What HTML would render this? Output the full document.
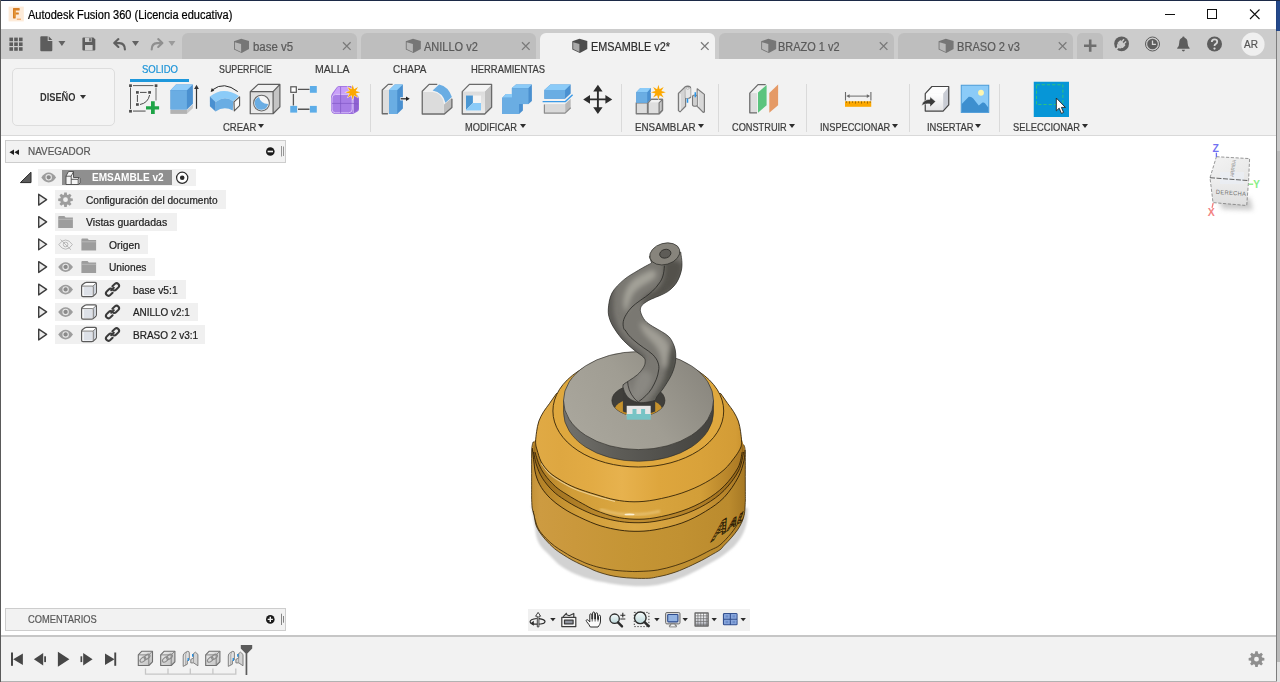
<!DOCTYPE html>
<html lang="es">
<head>
<meta charset="utf-8">
<title>Autodesk Fusion 360 (Licencia educativa)</title>
<style>
*{box-sizing:border-box;margin:0;padding:0}
html,body{width:1280px;height:682px;overflow:hidden;background:#fff}
body{font-family:"Liberation Sans",sans-serif;color:#333;position:relative}
.a,.tx,svg{position:absolute}
svg{overflow:visible}
.tx{white-space:nowrap;transform-origin:0 0;-webkit-text-stroke:0.22px currentColor}
.tab{top:33px;height:26px;width:175px;background:#bebebe;border-radius:6px 6px 0 0}
.sep{top:84px;width:1px;height:48px;background:#dadada}
.dd{width:0;height:0;border-left:3px solid transparent;border-right:3px solid transparent;border-top:4px solid #2d2d2d}
.row{height:19px;background:#f0f0f0}
</style>
</head>
<body>
<!-- window frame / desktop strip -->
<div class="a" style="left:1px;top:1px;width:1275px;height:28px;background:#fff"></div>
<div class="a" style="left:1px;top:29px;width:1275px;height:30px;background:#cccccc"></div>
<div class="a" style="left:1px;top:59px;width:1275px;height:76px;background:#f2f2f2"></div>
<div class="a" style="left:1px;top:135px;width:1275px;height:1px;background:#d9d9d9"></div>
<div class="a" style="left:1px;top:136px;width:1275px;height:499px;background:#fff"></div>
<div class="a" style="left:1277px;top:0;width:3px;height:31px;background:#24498c"></div>
<div class="a" style="left:1277px;top:31px;width:3px;height:120px;background:#cacaca"></div>
<div class="a" style="left:1277px;top:151px;width:3px;height:511px;background:#b9b9b9"></div>
<div class="a" style="left:1277px;top:662px;width:3px;height:20px;background:#e2e2e2"></div>
<div class="a" style="left:0;top:0;width:1280px;height:1px;background:#1c2a48"></div>
<div class="a" style="left:0;top:0;width:1px;height:682px;background:#5a5a5a"></div>
<div class="a" style="left:1276px;top:1px;width:1px;height:681px;background:#7d7d7d"></div>
<div class="a" style="left:1276px;top:1px;width:1px;height:30px;background:#22427f"></div>
<!-- title icon -->
<svg style="left:8px;top:6px" width="17" height="17" viewBox="8 6 17 17">
<rect x="8.600" y="6.600" width="15.200" height="14.800" fill="#fdebd9"/>
<path d="M13,8.400 q0,-0.400 0.400,-0.400 h5.900 q0.400,0 0.400,0.400 v1.700 q0,0.400 -0.400,0.400 h-3.600 v1.900 h2.700 q0.400,0 0.400,0.400 v1.400 q0,0.400 -0.400,0.400 h-2.700 v3.500 q0,0.400 -0.400,0.400 h-1.900 q-0.400,0 -0.400,-0.400z" fill="#d67f25"/>
<path d="M14.300,10.200 q1.200,-0.600 1.400,1 v5.400 q-0.700,0.600 -1.400,0z" fill="#f0a544" opacity="0.800"/>
<rect x="16.800" y="18.600" width="4.200" height="1.300" fill="#f2b071"/>
</svg>
<!-- window controls -->
<svg style="left:1160px;top:5px" width="110" height="20" viewBox="1160 5 110 20" fill="none" stroke="#111" stroke-width="1">
<path d="M1165,14.5 h10"/>
<rect x="1207.5" y="9.5" width="9" height="9"/>
<path d="M1250,9.5 l9.5,9.5 M1259.5,9.5 l-9.5,9.5" stroke-width="1.1"/>
</svg>
<!-- document tabs -->
<div class="a tab" style="left:182px"></div>
<div class="a tab" style="left:361px"></div>
<div class="a tab" style="left:540px;background:#f2f2f2"></div>
<div class="a tab" style="left:719px"></div>
<div class="a tab" style="left:898px"></div>
<div class="a" style="left:1077px;top:33px;width:26px;height:26px;background:#bfbfbf;border-radius:5px 5px 0 0"></div>
<svg style="left:0;top:29px" width="1280" height="30" viewBox="0 29 1280 30">
<defs>
<g id="cube"><path d="M0,2.6 L7.2,0 L15,2.4 L15,10.2 L7.6,14.4 L0,10.8z" fill="#5e5e5e"/><path d="M0.9,3.5 L7.1,5.3 L7.1,13.2 L0.9,10.3z" fill="#b7b7b7"/></g>
<g id="cubeA"><path d="M0,2.6 L7.2,0 L15,2.4 L15,10.2 L7.6,14.4 L0,10.8z" fill="#4c4c4c"/><path d="M0.9,3.5 L7.1,5.3 L7.1,13.2 L0.9,10.3z" fill="#a9a9a9"/></g>
<path id="tx" d="M0,0 l7.6,7.6 M7.6,0 l-7.6,7.6" stroke="#7a7a7a" stroke-width="1.3" fill="none"/>
</defs>
<use href="#cube" x="234" y="38.7" opacity="0.75"/><use href="#tx" x="343" y="42.3"/>
<use href="#cube" x="405.8" y="38.7" opacity="0.75"/><use href="#tx" x="522" y="42.3"/>
<use href="#cubeA" x="572.3" y="38.7"/><use href="#tx" x="701" y="42.3"/>
<use href="#cube" x="761.2" y="38.7" opacity="0.75"/><use href="#tx" x="879.8" y="42.3"/>
<use href="#cube" x="938.6" y="38.7" opacity="0.75"/><use href="#tx" x="1058.8" y="42.3"/>
<!-- plus -->
<path d="M1084,45.7 h12.4 M1090.2,39.6 v12.2" stroke="#6e6e6e" stroke-width="2.6" fill="none"/>
<!-- app grid -->
<g fill="#5d5d5d">
<rect x="9.4" y="37.6" width="3.6" height="3.6"/><rect x="14.2" y="37.6" width="3.6" height="3.6"/><rect x="19" y="37.6" width="3.6" height="3.6"/>
<rect x="9.4" y="42.4" width="3.6" height="3.6"/><rect x="14.2" y="42.4" width="3.6" height="3.6"/><rect x="19" y="42.4" width="3.6" height="3.6"/>
<rect x="9.4" y="47.2" width="3.6" height="3.6"/><rect x="14.2" y="47.2" width="3.6" height="3.6"/><rect x="19" y="47.2" width="3.6" height="3.6"/>
</g>
<!-- file -->
<path d="M40.3,37.3 q0,-1 1,-1 h6.4 v4.6 h4.6 v9.4 q0,1 -1,1 h-10 q-1,0 -1,-1z M48.7,36.3 l3.6,3.6 h-3.6z" fill="#5d5d5d"/>
<path d="M58.400,41 h7 l-3.500,4.900z" fill="#626262"/>
<!-- save -->
<path d="M82.4,38.6 q0,-1 1,-1 h10 l1.9,1.9 v9.9 q0,1 -1,1 h-10.9 q-1,0 -1,-1z" fill="#5d5d5d"/>
<rect x="85" y="37.6" width="6.6" height="4.4" fill="#cccccc"/><rect x="89.2" y="38.2" width="1.6" height="3.2" fill="#5d5d5d"/>
<rect x="85" y="45" width="7.6" height="5.4" fill="#cccccc"/>
<!-- undo -->
<path d="M118.400,39.100 L114.200,43.100 L118.400,47 M114.600,43.100 H119.600 Q124.800,43.300 124.900,49.400" stroke="#5f5f5f" stroke-width="2.100" fill="none" stroke-linecap="round" stroke-linejoin="round"/>
<path d="M132,41 h7 l-3.500,4.900z" fill="#626262"/>
<!-- redo -->
<path d="M158.200,39.100 L162.400,43.100 L158.200,47 M162,43.100 H157 Q151.800,43.300 151.700,49.400" stroke="#8f8f8f" stroke-width="2.100" fill="none" stroke-linecap="round" stroke-linejoin="round"/>
<path d="M168.400,41 h7 l-3.500,4.900z" fill="#9b9b9b"/>
<!-- extensions -->
<circle cx="1121.600" cy="43.800" r="7.400" fill="#5f5f5f"/>
<g transform="rotate(45 1121.200 44.300)" fill="#cccccc">
<rect x="1117.500" y="41.700" width="7.400" height="4.500" rx="0.800"/>
<path d="M1118.200,46 h6 q0,2.800 -3,3 q-3,-0.200 -3,-3z"/>
<rect x="1120.300" y="48" width="1.800" height="5"/>
<rect x="1119" y="38.800" width="1.400" height="3.300"/><rect x="1122" y="38.800" width="1.400" height="3.300"/>
</g>
<!-- clock -->
<circle cx="1152.5" cy="44" r="7" fill="none" stroke="#5d5d5d" stroke-width="1"/>
<circle cx="1152.5" cy="44" r="5.3" fill="#5d5d5d"/>
<path d="M1152.5,40.6 v3.8 h3.4" stroke="#d6d6d6" stroke-width="1.3" fill="none"/>
<!-- bell -->
<path d="M1183.4,36.6 q1.2,0 1.2,1.2 q3,1 3,5.2 q0,3.4 2,5 v0.8 h-12.4 v-0.8 q2,-1.6 2,-5 q0,-4.2 3,-5.2 q0,-1.2 1.2,-1.2z" fill="#5d5d5d"/>
<path d="M1181.8,49.8 h3.2 q-0.3,1.6 -1.6,1.6 q-1.3,0 -1.6,-1.6z" fill="#5d5d5d"/>
<!-- help -->
<circle cx="1214.5" cy="44" r="7.5" fill="#5d5d5d"/>
<path d="M1211.8,42 q0,-2.6 2.7,-2.6 q2.7,0 2.7,2.3 q0,1.4 -1.4,2.2 q-1.3,0.7 -1.3,2" stroke="#d8d8d8" stroke-width="1.8" fill="none"/>
<circle cx="1214.5" cy="48.6" r="1.15" fill="#d8d8d8"/>
<!-- avatar -->
<circle cx="1253" cy="44.2" r="11.6" fill="#efefef"/>
</svg>
<!-- ribbon structure -->
<div class="a" style="left:130px;top:79px;width:59px;height:3px;background:#1e98dc"></div>
<div class="a" style="left:12px;top:68px;width:103px;height:58px;border:1px solid #dddddd;border-radius:5px;background:#f4f4f4"></div>
<div class="a dd" style="left:80px;top:95px;border-top-color:#333"></div>
<div class="a dd" style="left:258px;top:124px"></div>
<div class="a dd" style="left:520px;top:124px"></div>
<div class="a dd" style="left:698px;top:124px"></div>
<div class="a dd" style="left:789px;top:124px"></div>
<div class="a dd" style="left:892px;top:124px"></div>
<div class="a dd" style="left:975px;top:124px"></div>
<div class="a dd" style="left:1082px;top:124px"></div>
<div class="a sep" style="left:370px"></div>
<div class="a sep" style="left:621px"></div>
<div class="a sep" style="left:718px"></div>
<div class="a sep" style="left:806px"></div>
<div class="a sep" style="left:909px"></div>
<div class="a sep" style="left:999px"></div>
<svg style="left:0;top:59px" width="1280" height="77" viewBox="0 59 1280 77">
<defs>
<linearGradient id="gB" x1="0" y1="0" x2="0" y2="1"><stop offset="0" stop-color="#6db4ec"/><stop offset="1" stop-color="#4a98dc"/></linearGradient>
<linearGradient id="gG" x1="0" y1="0" x2="0" y2="1"><stop offset="0" stop-color="#dcdcdc"/><stop offset="1" stop-color="#ececec"/></linearGradient>
<linearGradient id="gW" x1="0" y1="0" x2="0" y2="1"><stop offset="0" stop-color="#ffffff"/><stop offset="1" stop-color="#e2e2e4"/></linearGradient>
<linearGradient id="gP" x1="0" y1="0" x2="1" y2="1"><stop offset="0" stop-color="#c9a6f2"/><stop offset="1" stop-color="#9a6fdc"/></linearGradient>
</defs>
<!-- 1 create sketch -->
<path d="M133,85.600 H153.400 M130.500,87.500 V109" stroke="#5a5a5a" stroke-width="1" fill="none"/>
<path d="M156,87.500 V100.600" stroke="#9a9a9a" stroke-width="1.500" fill="none"/>
<path d="M133,111.100 H145.600" stroke="#8a8a8a" stroke-width="1.600" fill="none"/>
<g fill="#4a4a4a"><rect x="129.100" y="84.300" width="2.800" height="2.700"/><rect x="154.700" y="84.300" width="2.700" height="2.700"/><rect x="129.100" y="109.900" width="2.800" height="2.700"/>
<rect x="136" y="91.100" width="2.800" height="2.600"/><rect x="148.200" y="91.100" width="2.800" height="2.600"/><rect x="136" y="103.200" width="2.800" height="2.600"/></g>
<path d="M140,92.400 H146.600 M137.400,95 V101.900" stroke="#4a4a4a" stroke-width="1" fill="none"/>
<path d="M149.600,95 Q148,103 140,104.500" stroke="#4a4a4a" stroke-width="1" fill="none"/>
<path d="M151,101.250 h3.750 v5 h4.350 v3.150 h-4.350 v4.600 h-3.750 v-4.600 h-5 v-3.150 h5z" fill="#1ea446"/>
<!-- 2 extrude -->
<path d="M170.500,110 h16.400 l6,-5.600 v3.800 l-6,5.600 h-16.400z" fill="#c9c9c9"/><path d="M170.500,110 h16.400 v3.800 h-16.400z" fill="#b3b3b3"/>
<path d="M170.500,90.300 l5.500,-5.900 h16.900 v19.400 l-6,5.600 h-16.400z" fill="#4a90d0"/>
<path d="M170.500,90.300 l5.500,-5.900 h16.900 l-6,5.900z" fill="#90ccf9"/>
<path d="M170.500,90.300 h16.400 v19.100 h-16.400z" fill="#6aade3"/>
<path d="M196.500,88 v20.800" stroke="#333" stroke-width="1.200"/><path d="M196.500,84.800 l2.400,4.100 h-4.800z" fill="#333"/>
<!-- 3 revolve -->
<path d="M209.900,96.600 Q222.750,85.600 239,95.900 L233.400,101.250 Q224.600,95 215.600,101.900z" fill="#8bcbf8"/>
<path d="M215.600,101.900 Q224.600,95 233.400,101.250 L232.750,110.600 Q224,105.600 215.600,111.600z" fill="#6aade3"/>
<path d="M209.900,96.600 L215.600,101.900 V111.600 L209.900,106.250z" fill="#4a90d0"/>
<path d="M234,101.900 L239.600,96.900 V105.600 L234.300,110.900z" fill="#f8f8f8" stroke="#555" stroke-width="1.100" stroke-linejoin="round"/>
<path d="M237.750,91.600 Q224,80.800 212.600,89.800" fill="none" stroke="#2a2a2a" stroke-width="1"/>
<path d="M210.600,91.900 L211.800,88.100 L214.200,90.700z" fill="#2a2a2a"/>
<!-- 4 hole -->
<path d="M250.250,91.600 L258.100,84.400 H279.900 V106.900 L273.100,113.750 H250.250z" fill="#c4c4c4"/>
<path d="M250.250,91.600 L258.100,84.400 H279.900 L273.100,91.600z" fill="#f1f1f1"/>
<path d="M250.250,91.600 H273.100 V113.750 H250.250z" fill="url(#gG)"/>
<path d="M250.250,91.600 L258.100,84.400 H279.900 V106.900 L273.100,113.750 H250.250z M250.250,91.600 H273.100 V113.750 M273.100,91.600 L279.900,84.400" fill="none" stroke="#5e5e5e" stroke-width="1.200" stroke-linejoin="round"/>
<circle cx="261.500" cy="103.100" r="7.900" fill="#f5f5f5" stroke="#6a6a6a" stroke-width="1.100"/>
<path d="M259,96.900 Q260.500,103.300 268.100,104.100 A6.700,6.700 0 1 1 259,96.900z" fill="#6aade3"/>
<!-- 5 rectangular pattern -->
<path d="M298,89.400 H309.500 M293.400,94 V105.500 M298,109.250 H309.500" stroke="#555" stroke-width="1.300" fill="none"/>
<rect x="290.800" y="86.800" width="5.500" height="5.500" fill="#fff" stroke="#555" stroke-width="1.200"/>
<rect x="309.900" y="86" width="6.900" height="6.800" fill="#5dade8"/><rect x="290.250" y="105.900" width="6.900" height="6.700" fill="#5dade8"/><rect x="309.900" y="105.900" width="6.900" height="6.700" fill="#5dade8"/>
<!-- 6 form -->
<path d="M331,97.500 Q331,95 332.500,93 L337,87 Q338,86 339.500,86 H351 L359,97.500 V109 Q359,110.500 357.500,111.500 L354,113.500 Q353,114 351,114 H336 Q331,114 331,109z" fill="#9a6edc"/>
<path d="M332.500,94.800 L337.600,87.200 Q338,86.700 339,86.700 H350.500 L352,94.800z" fill="#c9a0f9"/>
<rect x="332" y="94.400" width="20.200" height="18.400" rx="3.600" fill="#a77de6" stroke="#dcc6fb" stroke-width="0.900"/>
<path d="M353.800,96.500 L358.400,99.200 V109.200 L353.800,112.600z" fill="#8e62d2"/>
<path d="M353.200,95.500 V113" stroke="#d5bdf8" stroke-width="0.900"/>
<path d="M340.600,86.800 V113.200 M332,103.400 H352.200 L358.400,104" stroke="#7f56c4" stroke-width="0.800" fill="none" opacity="0.850"/>
<path d="M352.75,83.80 L354.24,88.60 L358.69,86.26 L356.35,90.71 L361.15,92.20 L356.35,93.69 L358.69,98.14 L354.24,95.80 L352.75,100.60 L351.26,95.80 L346.81,98.14 L349.15,93.69 L344.35,92.20 L349.15,90.71 L346.81,86.26 L351.26,88.60z" fill="#f3f3f3"/>
<path d="M352.75,84.70 L353.97,89.24 L358.05,86.90 L355.71,90.98 L360.25,92.20 L355.71,93.42 L358.05,97.50 L353.97,95.16 L352.75,99.70 L351.53,95.16 L347.45,97.50 L349.79,93.42 L345.25,92.20 L349.79,90.98 L347.45,86.90 L351.53,89.24z" fill="#fca800"/>
<!-- 7 press pull -->
<path d="M382.250,90 L388.200,84.400 H392.600 L389.100,90 V113.750 H382.250z" fill="#f0f0f0"/>
<path d="M382.250,90 H389.100 V113.750 H382.250z" fill="#dedede"/>
<path d="M392.600,84.400 H388.200 L382.250,90 V113.750 H387.900" fill="none" stroke="#6a6a6a" stroke-width="1.300" stroke-linejoin="round"/>
<path d="M389.100,90 L394.750,84.400 H402.900 V108.400 L397.250,114 H389.100z" fill="#4a90d0"/>
<path d="M389.100,90 L394.750,84.400 H402.900 L397.250,90z" fill="#8bcbf8"/>
<path d="M389.100,90 H397.250 V114 H389.100z" fill="#6aade3"/>
<path d="M400.200,98.800 H406.500" stroke="#f3f3f3" stroke-width="3.200"/>
<path d="M400.700,98.800 H406.500" stroke="#2a2a2a" stroke-width="1.300"/><path d="M409.750,98.800 L406,96.500 V101.100z" fill="#222"/>
<!-- 8 fillet -->
<path d="M444,104.400 L451.900,98 V107.500 L444.400,114 H444z" fill="#bdbdbd"/>
<path d="M422.900,91.600 L429.300,85 H437.250 L432.600,91z" fill="#f1f1f1"/>
<path d="M422.900,92 H432.500 Q442.500,93 443.900,103.750 V113.300 H422.900z" fill="#dcdcdc"/>
<path d="M432.600,90.600 L439.100,84.400 Q448.500,86.500 451.900,96.900 L445.400,102.800 Q443.200,92.800 432.600,90.600z" fill="#6aade3"/>
<path d="M437.250,84.400 H429.100 L422.250,91.250 V114 H444.400 L451.900,107.500 V98.750" fill="none" stroke="#6a6a6a" stroke-width="1.300" stroke-linejoin="round"/>
<!-- 9 shell -->
<path d="M484.750,91.600 L491.600,84.400 V107.200 L484.750,114z" fill="#c0c0c0"/>
<path d="M462.250,91.600 L469.400,84.400 H491.600 L484.750,91.600z" fill="#f4f4f4"/>
<path d="M462.250,91.600 H484.750 V114 H462.250z" fill="url(#gG)"/>
<path d="M462.250,91.600 L469.400,84.400 H491.600 V107.200 L484.750,114 H462.250z" fill="none" stroke="#6a6a6a" stroke-width="1.300" stroke-linejoin="round"/>
<rect x="466" y="95.600" width="15" height="15" fill="#f4f4f4"/>
<path d="M466,95.600 H472.900 V103.100 L466,110z" fill="#4a96d2"/>
<path d="M472.900,103.100 H481 V110.600 H466 V110z" fill="#8bcbf8"/>
<!-- 10 combine -->
<path d="M511.900,88.100 L516,84.400 H531.900 V100.900 L528.500,104.100 H511.900z" fill="#4a90d0"/>
<path d="M511.900,88.100 L516,84.400 H531.900 L528.500,88.100z" fill="#8bcbf8"/>
<path d="M511.900,88.100 H528.500 V104.100 H511.900z" fill="#6aade3"/>
<path d="M502.250,97.800 L506,94.100 H512 V104.100 H522.900 V110.600 L519.100,114 H502.250z" fill="#4a90d0"/>
<path d="M502.250,97.800 L506,94.100 H512 V97.800z" fill="#8bcbf8"/>
<path d="M502.250,97.800 H512 V104.100 H519.100 V114 H502.250z" fill="#6aade3"/>
<!-- 11 offset face -->
<path d="M565.100,104.100 L570.700,98.750 V107.800 L565.100,113.100z" fill="#b8b8b8"/>
<path d="M544.400,104.100 H565.100 V113.100 H544.400z" fill="#d9d9d9"/>
<path d="M544.400,104.500 V113.100 H565.100 L570.700,107.800" fill="none" stroke="#8c8c8c" stroke-width="1.200" stroke-linejoin="round"/>
<path d="M544.400,90 L550.400,84.400 H570.700 V93.400 L565.100,98.750 H544.400z" fill="#4a90d0"/>
<path d="M544.400,90 L550.400,84.400 H570.700 L565.100,90z" fill="#8bcbf8"/>
<path d="M544.400,90 H565.100 V98.750 H544.400z" fill="#6aade3"/>
<path d="M542.600,101.600 H565.400 L572.600,94.700" fill="none" stroke="#3a9ae8" stroke-width="1.400"/>
<!-- 12 move -->
<path d="M597.900,90 V109 M588.500,99.400 H607" stroke="#2d2d2d" stroke-width="1.900" fill="none"/>
<path d="M597.900,84.700 L602.600,91.600 H593.200z M597.900,114 L602.600,107.200 H593.200z M583.200,99.400 L590,95 V103.750z M612.250,99.400 L605.400,95 V103.750z" fill="#2d2d2d"/>
<!-- 13 new component -->
<path d="M636.250,102.800 H647.500 V113.750 H636.250z" fill="#dcdcdc" stroke="#7a7a7a" stroke-width="1.300" stroke-linejoin="round"/>
<path d="M648.100,102.800 L651.250,99.400 H662.500 V110.300 L659.100,113.750 H648.100z" fill="#c8c8c8" stroke="#7a7a7a" stroke-width="1.300" stroke-linejoin="round"/>
<path d="M648.100,102.800 L651.250,99.400 H662.500 L659.100,102.800z" fill="#f2f2f2"/>
<path d="M648.100,102.800 H659.100 V113.750 H648.100z" fill="#dedede"/>
<path d="M648.100,102.800 L651.250,99.400 H662.500 V110.300 L659.100,113.750 H648.100z M659.100,113.750 V102.800 L662.500,99.400" fill="none" stroke="#7a7a7a" stroke-width="1.200" stroke-linejoin="round"/>
<path d="M636.250,92.200 L640.300,88.100 H650.900 V99 L647.200,102.800 H636.250z" fill="#4a90d0"/>
<path d="M636.250,92.200 L640.300,88.100 H650.900 L647.200,92.200z" fill="#8bcbf8"/>
<path d="M636.250,92.200 H647.200 V102.800 H636.250z" fill="#6aade3"/>
<path d="M658.40,83.80 L659.89,88.60 L664.34,86.26 L662.00,90.71 L666.80,92.20 L662.00,93.69 L664.34,98.14 L659.89,95.80 L658.40,100.60 L656.91,95.80 L652.46,98.14 L654.80,93.69 L650.00,92.20 L654.80,90.71 L652.46,86.26 L656.91,88.60z" fill="#f3f3f3"/>
<path d="M658.40,84.70 L659.62,89.24 L663.70,86.90 L661.36,90.98 L665.90,92.20 L661.36,93.42 L663.70,97.50 L659.62,95.16 L658.40,99.70 L657.18,95.16 L653.10,97.50 L655.44,93.42 L650.90,92.20 L655.44,90.98 L653.10,86.90 L657.18,89.24z" fill="#fca800"/>
<!-- 14 joint -->
<path d="M678.400,93.400 L685.300,86.800 Q686,86.200 687.800,86.200 Q690.600,86.400 690.600,88.200 V96.600 Q690.500,98.100 688,98.100 Q685.600,98.100 685.600,98.100 V106.250 L680,111.900 L678.400,110.600z" fill="#d4d4d4" stroke="#7a7a7a" stroke-width="1.200" stroke-linejoin="round"/>
<path d="M685.300,88.500 V98 " stroke="#8a8a8a" stroke-width="0.800" fill="none"/>
<path d="M685.400,88 Q688,86.600 690.600,88.200 V96.600 Q688,98.600 685.600,98.100z" fill="#e6e6e6"/>
<path d="M680.300,94 V110.500" stroke="#efefef" stroke-width="1"/>
<ellipse cx="687.700" cy="88.200" rx="1.500" ry="0.900" fill="#fff" stroke="#8a8a8a" stroke-width="0.600"/>
<path d="M697.200,88.750 L704.400,94.400 V111.900 L703.200,112.400 L697.200,106.250z" fill="#d8d8d8" stroke="#7a7a7a" stroke-width="1.200" stroke-linejoin="round"/>
<path d="M692.500,96.600 Q692.600,95 695,95 Q697.400,95 697.500,96.600 V104.800 Q697.400,106.300 695,106.300 Q692.600,106.300 692.500,104.800z" fill="#cfcfcf" stroke="#7a7a7a" stroke-width="1.100"/>
<path d="M698.300,90.800 V106.600" stroke="#f0f0f0" stroke-width="0.900"/>
<path d="M687.500,98.400 V102.800 M695.300,92.200 V97.200" stroke="#2a96ea" stroke-width="1.500"/>
<!-- 15 construct -->
<path d="M750.400,93.100 H757 V112.800 H750.400z" fill="#dedede"/>
<path d="M750.400,93.100 L758.200,85.200 H765 L757.500,93.100z" fill="#f2f2f2"/>
<path d="M765.700,84.600 H758 L749.800,93.100 V112.800 H757" fill="none" stroke="#6a6a6a" stroke-width="1.300" stroke-linejoin="round"/>
<path d="M758,92.600 L766.600,84.900 V105.200 L758,112.800z" fill="#5cc47e"/>
<path d="M769.300,93.100 L778.100,84.600 V105.200 L769.300,112.800z" fill="#e59a66"/>
<!-- 16 measure -->
<path d="M845.500,92 V100.400 M870.900,92 V100.400" stroke="#6a6a6a" stroke-width="1.100"/><path d="M848,96.100 H868.500" stroke="#6a6a6a" stroke-width="1"/>
<path d="M846.300,96.100 L849.600,94.200 V98z M870.100,96.100 L866.800,94.200 V98z" fill="#6a6a6a"/>
<rect x="845" y="101.300" width="26.250" height="5.500" fill="#fca800"/>
<path d="M846.500,101.300 v1.500 M849.500,101.300 v2.300 M852.500,101.300 v1.500 M855.500,101.300 v2.300 M858.500,101.300 v1.500 M861.500,101.300 v2.300 M864.500,101.300 v1.500 M867.500,101.300 v2.300 M870.200,101.300 v1.500" stroke="#7a5200" stroke-width="0.700"/>
<!-- 17 insert derive -->
<path d="M943.100,93.600 L948.750,86.500 V104.900 L943.100,111.100z" fill="#c9ccd4"/>
<path d="M925.250,93.600 L931.900,86.500 H948.750 L943.100,93.600z" fill="#fdfdfd"/>
<path d="M925.250,93.600 H943.100 V111.100 H925.250z" fill="url(#gW)"/>
<path d="M925.250,93.600 L931.900,86.500 H948.750 V104.900 L943.100,111.100 H925.250z" fill="none" stroke="#454545" stroke-width="1.200" stroke-linejoin="round"/>
<path d="M921.600,105.400 Q923,99.600 930,99.300 V96.750 L935.600,101.600 L930,107 V104 Q925.500,103.400 921.600,105.400z" fill="#3a3a3a" stroke="#f3f3f3" stroke-width="0.500"/>
<!-- 18 insert image -->
<rect x="961.250" y="85.250" width="27.500" height="27.150" fill="#8bcbf8" stroke="#4a9ad8" stroke-width="1"/>
<path d="M961.750,104 L968.750,96.750 Q971,96.600 973,98.200 L978.750,105.500 L982.500,102.600 Q983.750,102 985,103.200 L988.250,107.400 V111.900 H961.750z" fill="#3d8fcf"/>
<circle cx="981" cy="92.750" r="2.900" fill="#fdf6b0"/>
<!-- 19 select -->
<rect x="1033.750" y="81.750" width="35.250" height="35.250" fill="#0696d7"/>
<rect x="1036.500" y="84.750" width="26.400" height="19.750" fill="none" stroke="#2ec27e" stroke-width="1" stroke-dasharray="3.200,2"/>
<path d="M1056.300,98 V110.900 L1059.200,108.200 L1061.400,113.400 L1063.600,112.400 L1061.400,107.400 H1065.400z" fill="#fff" stroke="#222" stroke-width="0.900" stroke-linejoin="round"/>
</svg>
<!-- browser panel -->
<div class="a" style="left:5px;top:140px;width:281px;height:23px;background:#f2f2f2;border:1px solid #cdcdcd"></div>
<div class="a" style="left:38.4px;top:168.5px;width:157.3px;height:17.7px;background:#f0f0f0"></div>
<div class="a" style="left:55.1px;top:190.3px;width:170.7px;height:18.7px;background:#f0f0f0"></div>
<div class="a" style="left:55.1px;top:212.7px;width:121.6px;height:18.6px;background:#f0f0f0"></div>
<div class="a" style="left:55.2px;top:235.2px;width:92.7px;height:18.5px;background:#f0f0f0"></div>
<div class="a" style="left:55.2px;top:257.7px;width:100.2px;height:18.6px;background:#f0f0f0"></div>
<div class="a" style="left:55.2px;top:280.2px;width:131.0px;height:18.7px;background:#f0f0f0"></div>
<div class="a" style="left:55.2px;top:302.7px;width:142.5px;height:18.7px;background:#f0f0f0"></div>
<div class="a" style="left:55.2px;top:325.1px;width:149.8px;height:18.8px;background:#f0f0f0"></div>
<div class="a" style="left:62px;top:170px;width:110px;height:14.7px;background:#8f8f8f"></div>
<svg style="left:0;top:136px" width="300" height="220" viewBox="0 136 300 220">
<defs>
<g id="eye"><path d="M0,4.9 Q3.4,0 7.4,0 Q11.4,0 14.8,4.9 Q11.4,9.8 7.4,9.8 Q3.4,9.8 0,4.9z" fill="#9d9d9d"/><circle cx="7.4" cy="4.7" r="2.7" fill="#8a8a8a" stroke="#e6e6e6" stroke-width="1.1"/></g>
<g id="tri"><path d="M0.7,0.8 L8.6,6.1 L0.7,11.6z" fill="#ececec" stroke="#3d3d3d" stroke-width="1.4" stroke-linejoin="round"/></g>
<g id="fold"><path d="M0,1 q0,-1 1,-1 h5.2 l1.2,1.6 h7.3 v10.500 h-14.700z" fill="#9d9d9d"/><path d="M0,3.400 h14.700" stroke="#c4c4c4" stroke-width="0.7"/></g>
<g id="body"><path d="M0.6,4.600 q0,-1.200 1,-2 l2.400,-1.800 q0.600,-0.400 1.600,-0.400 h8.600 q1.200,0 1.200,1.200 v8.800 q0,0.800 -0.600,1.400 l-2.600,2.400 q-0.600,0.600 -1.600,0.600 h-8.600 q-1.400,0 -1.400,-1.400z" fill="#fff" stroke="#5a5a5a" stroke-width="1.2" stroke-linejoin="round"/><path d="M2.600,5 h8.600 v8.600 h-8.600z" fill="#dde1e8"/><path d="M12,4.600 l2.600,-2.400 v8.600 l-2.600,2.600z" fill="#cdd3dc"/><path d="M0.800,4.200 h10.600 q0.800,0 0.800,0.800 v9.600 M11.800,4.400 l3.200,-3" fill="none" stroke="#6a6a6a" stroke-width="0.9"/></g>
<g id="link" fill="none" stroke="#3a3a3a" stroke-width="2.050" stroke-linecap="round"><path d="M6.400,8.200 L9,5.800 M7.600,4.200 L10.200,1.800 a2.500,2.500 0 0 1 3.600,3.400 L11.200,7.800 a2.400,2.400 0 0 1 -2.600,0.600"/><path d="M7.800,10.800 L5.200,13.200 a2.500,2.500 0 0 1 -3.600,-3.400 L4.200,7.200 a2.400,2.400 0 0 1 2.600,-0.600"/></g>
</defs>
<path d="M14,149.400 v5.600 l-4.600,-2.800z M19,149.400 v5.600 l-4.600,-2.800z" fill="#1f1f1f"/>
<circle cx="270.300" cy="151.500" r="4.300" fill="#1a1a1a"/><rect x="267.600" y="150.700" width="5.400" height="1.600" fill="#f2f2f2"/>
<path d="M281.500,146 v10.500 M283.500,146.500 v9.500" stroke="#8a8a8a" stroke-width="0.9"/>
<path d="M31,172.200 V182.600 H20.400z" fill="#5d5d5d" stroke="#2a2a2a" stroke-width="1" stroke-linejoin="round"/>
<use href="#eye" x="41.300" y="172.600"/>
<g stroke="#4a4a4a" stroke-width="0.9" stroke-linejoin="round"><path d="M66,176 l2.500,-4.500 h5 v6 h5.500 l1,1 v4.500 l-1.500,1.500 h-12.500z" fill="#f4f4f4"/><path d="M66,176.200 h5.200 v8.200 M71.200,179.300 h7 v5.200 M71.200,176.200 l2.300,-4.500 M78.200,179.300 l0.800,-1.800" fill="none"/></g>
<circle cx="182.200" cy="177.800" r="5.600" fill="#fff" stroke="#2a2a2a" stroke-width="1.200"/><circle cx="182.200" cy="177.800" r="2.300" fill="#2a2a2a"/>
<use href="#tri" x="38" y="193.5"/>
<use href="#tri" x="38" y="215.8"/>
<use href="#tri" x="38" y="238.2"/>
<use href="#tri" x="38" y="260.8"/>
<use href="#tri" x="38" y="283.3"/>
<use href="#tri" x="38" y="305.8"/>
<use href="#tri" x="38" y="328.3"/>
<path d="M72.79,198.45 L72.79,200.95 L70.56,201.27 L70.19,202.17 L71.54,203.97 L69.77,205.74 L67.97,204.39 L67.07,204.76 L66.75,206.99 L64.25,206.99 L63.93,204.76 L63.03,204.39 L61.23,205.74 L59.46,203.97 L60.81,202.17 L60.44,201.27 L58.21,200.95 L58.21,198.45 L60.44,198.13 L60.81,197.23 L59.46,195.43 L61.23,193.66 L63.03,195.01 L63.93,194.64 L64.25,192.41 L66.75,192.41 L67.07,194.64 L67.97,195.01 L69.77,193.66 L71.54,195.43 L70.19,197.23 L70.56,198.13z M67.9,199.7 a2.4,2.4 0 1 0 -4.8,0 a2.4,2.4 0 1 0 4.8,0z" fill="#9d9d9d" fill-rule="evenodd"/>
<use href="#fold" x="58.200" y="215.900"/>
<g fill="none" stroke="#b9b9b9" stroke-width="1"><path d="M58.800,244.600 Q62,240 65.600,240 Q69.200,240 72.400,244.600 Q69.200,249.200 65.600,249.200 Q62,249.200 58.800,244.600z"/><circle cx="65.600" cy="244.500" r="2.300"/><path d="M60.500,239.600 L71,249.800"/></g>
<use href="#fold" x="81.400" y="238.400"/>
<use href="#eye" x="58.200" y="262.200"/><use href="#fold" x="81.400" y="260.900"/>
<use href="#eye" x="58.200" y="284.7"/><use href="#body" x="81" y="281.9"/><use href="#link" x="104.800" y="282.0"/>
<use href="#eye" x="58.200" y="307.2"/><use href="#body" x="81" y="304.4"/><use href="#link" x="104.800" y="304.5"/>
<use href="#eye" x="58.200" y="329.7"/><use href="#body" x="81" y="326.9"/><use href="#link" x="104.800" y="327.0"/>
</svg>
<!-- 3D model -->
<svg style="left:500px;top:220px" width="280" height="380" viewBox="500 220 280 380">
<defs>
<linearGradient id="yBand" x1="531" y1="0" x2="746" y2="0" gradientUnits="userSpaceOnUse">
<stop offset="0" stop-color="#c39238"/><stop offset="0.040" stop-color="#cd9b41"/><stop offset="0.200" stop-color="#ca983c"/><stop offset="0.450" stop-color="#c59535"/><stop offset="0.700" stop-color="#c19132"/><stop offset="0.920" stop-color="#bb8b2e"/><stop offset="1" stop-color="#a67824"/></linearGradient>
<linearGradient id="yDome" x1="535" y1="0" x2="742" y2="0" gradientUnits="userSpaceOnUse">
<stop offset="0" stop-color="#e0aa45"/><stop offset="0.120" stop-color="#dea741"/><stop offset="0.270" stop-color="#e2ab44"/><stop offset="0.420" stop-color="#e7b24e"/><stop offset="0.600" stop-color="#dea63d"/><stop offset="0.800" stop-color="#d9a23a"/><stop offset="0.970" stop-color="#d39c36"/><stop offset="1" stop-color="#cb9430"/></linearGradient>
<linearGradient id="yGr1" x1="535" y1="0" x2="742" y2="0" gradientUnits="userSpaceOnUse">
<stop offset="0" stop-color="#b07e25"/><stop offset="0.180" stop-color="#d19d38"/><stop offset="0.450" stop-color="#dba741"/><stop offset="0.800" stop-color="#d29e38"/><stop offset="1" stop-color="#aa7823"/></linearGradient>
<linearGradient id="yGr2" x1="535" y1="0" x2="742" y2="0" gradientUnits="userSpaceOnUse">
<stop offset="0" stop-color="#b07e25"/><stop offset="0.200" stop-color="#cf9c38"/><stop offset="0.480" stop-color="#dcaa46"/><stop offset="0.800" stop-color="#cc9836"/><stop offset="1" stop-color="#a97722"/></linearGradient>
<linearGradient id="yGr3" x1="535" y1="0" x2="742" y2="0" gradientUnits="userSpaceOnUse">
<stop offset="0" stop-color="#9a6c1c"/><stop offset="0.300" stop-color="#b9872c"/><stop offset="0.500" stop-color="#c08e31"/><stop offset="0.800" stop-color="#b07e27"/><stop offset="1" stop-color="#946618"/></linearGradient>
<linearGradient id="gDisc" x1="575" y1="445" x2="700" y2="355" gradientUnits="userSpaceOnUse">
<stop offset="0" stop-color="#aaa79d"/><stop offset="0.500" stop-color="#a09d93"/><stop offset="1" stop-color="#88857d"/></linearGradient>
<linearGradient id="gRim" x1="563" y1="0" x2="714" y2="0" gradientUnits="userSpaceOnUse">
<stop offset="0" stop-color="#73726d"/><stop offset="0.350" stop-color="#5e5d58"/><stop offset="1" stop-color="#43423e"/></linearGradient>
<clipPath id="cHole"><ellipse cx="638.400" cy="400.500" rx="26.500" ry="15.700"/></clipPath>
<filter id="bl1" x="-20%" y="-20%" width="140%" height="140%"><feGaussianBlur stdDeviation="1.200"/></filter>
<filter id="bl2" x="-30%" y="-30%" width="160%" height="160%"><feGaussianBlur stdDeviation="2.600"/></filter>
<clipPath id="cBand"><path d="M533.0,442.0 C532.8,443.3 531.9,445.3 531.7,450.0 C531.5,454.7 531.6,462.0 531.6,470.0 C531.6,478.0 531.6,493.3 531.6,498.0 C531.7,499.7 531.8,505.0 532.2,508.0 C532.6,511.0 533.6,513.2 534.2,516.0 C534.8,518.8 535.0,522.2 535.9,524.8 C536.8,527.4 537.8,529.3 539.4,531.8 C541.0,534.3 543.1,537.0 545.6,539.8 C548.1,542.6 551.5,546.1 554.4,548.6 C557.3,551.1 560.3,552.8 563.2,554.7 C566.1,556.6 569.1,558.4 572.0,560.0 C574.9,561.6 578.1,563.1 580.8,564.4 C583.5,565.6 585.4,566.4 588.0,567.5 C590.6,568.6 593.0,570.1 596.4,571.3 C599.8,572.5 604.2,573.9 608.1,574.9 C612.0,575.9 615.5,576.5 619.8,577.1 C624.1,577.7 629.2,578.0 634.0,578.2 C638.8,578.4 644.9,578.5 648.8,578.3 C652.7,578.1 654.7,577.4 657.6,576.8 C660.5,576.2 663.5,575.7 666.4,574.9 C669.3,574.1 672.3,573.2 675.2,572.2 C678.1,571.2 681.1,570.0 684.0,568.7 C686.9,567.5 689.9,566.1 692.8,564.7 C695.7,563.3 698.7,561.9 701.6,560.4 C704.5,558.9 707.3,557.3 710.4,555.5 C713.5,553.7 717.7,551.5 720.0,549.8 C722.3,548.1 722.4,547.2 724.3,545.2 C726.2,543.2 729.1,540.3 731.3,537.8 C733.5,535.2 735.7,532.5 737.5,529.9 C739.3,527.3 740.7,524.8 741.9,522.0 C743.1,519.2 743.9,516.9 744.5,513.2 C745.1,509.5 745.2,502.2 745.4,500.0 C745.4,496.7 745.3,488.0 745.3,480.0 C745.3,472.0 745.4,457.8 745.2,452.0 C745.0,446.2 744.2,446.2 744.0,445.0z"/></clipPath>

<path id="hookP" d="M649.4,256.4 L651.6,263 C649.4,264.2 643.0,267.5 638.4,270.3 C633.8,273.1 628.1,276.1 623.7,279.9 C619.3,283.7 614.6,288.1 612.0,293.0 C609.4,297.9 608.6,304.7 608.3,309.2 C608.0,313.7 608.8,316.5 610.0,320.0 C611.2,323.5 613.0,326.6 615.3,330.0 C617.5,333.4 620.4,337.3 623.5,340.6 C626.6,343.9 630.7,347.3 634.0,350.0 C637.3,352.7 641.5,355.1 643.4,357.0 C645.3,358.9 645.2,359.9 645.2,361.7 C645.2,363.5 644.7,365.5 643.4,367.6 C642.1,369.8 640.0,372.5 637.6,374.6 C635.2,376.8 631.6,378.9 629.3,380.5 C627.0,382.1 625.1,383.0 624.0,384.0 C622.9,385.0 623.1,385.9 622.9,386.3 C623.2,387.4 623.8,390.9 625.0,393.0 C626.2,395.1 627.7,397.4 630.0,399.0 C632.3,400.6 635.7,402.0 638.7,402.5 C641.7,403.0 645.2,402.4 648.0,402.0 C650.8,401.6 654.0,400.7 655.2,400.4 C655.6,399.6 656.3,397.4 657.5,395.7 C658.7,393.9 660.6,392.0 662.2,389.9 C663.8,387.8 665.3,385.4 666.9,382.8 C668.5,380.2 670.2,377.7 671.6,374.6 C673.0,371.5 674.4,367.5 675.1,364.0 C675.8,360.5 675.9,356.6 675.7,353.5 C675.5,350.4 675.0,348.1 673.9,345.3 C672.8,342.6 671.3,339.3 669.2,337.0 C667.1,334.7 664.3,333.3 661.5,331.5 C658.7,329.7 655.2,328.1 652.5,326.3 C649.8,324.5 647.0,322.9 645.0,320.5 C643.0,318.1 641.2,314.4 640.6,312.0 C640.0,309.6 640.4,308.0 641.3,306.3 C642.2,304.6 644.3,303.2 646.0,302.0 C647.7,300.8 649.3,300.1 651.6,299.0 C653.9,297.9 657.3,296.7 660.0,295.5 C662.7,294.3 665.4,293.2 667.7,291.6 C670.0,290.0 672.3,287.9 674.0,286.0 C675.7,284.1 676.8,282.3 678.0,280.0 C679.2,277.7 680.3,274.7 681.0,272.0 C681.7,269.3 682.0,267.0 682.0,263.7 C682.0,260.4 680.9,253.9 680.7,252.0z"/><clipPath id="cHook"><use href="#hookP"/></clipPath>
<pattern id="hatch" width="3" height="3" patternUnits="userSpaceOnUse" patternTransform="rotate(25)"><rect width="3" height="3" fill="#c4922f"/><rect width="3" height="1.300" fill="#3a2a0a"/></pattern>
</defs>
<path d="M531.3,505.0 C531.6,506.8 532.5,512.7 533.0,516.0 C533.5,519.3 534.0,521.1 534.6,524.8 C535.2,528.5 535.7,534.4 536.8,538.0 C537.9,541.6 539.0,543.7 541.0,546.5 C543.0,549.3 546.0,551.8 548.8,554.6 C551.6,557.4 554.7,560.9 557.6,563.4 C560.5,565.9 563.5,567.8 566.4,569.6 C569.3,571.4 572.3,572.7 575.2,574.0 C578.1,575.3 581.1,576.5 584.0,577.5 C586.9,578.5 590.1,579.2 592.8,579.9 C595.5,580.6 596.8,581.0 600.0,581.6 C603.2,582.2 607.7,583.1 612.0,583.8 C616.3,584.5 621.3,585.2 626.0,585.6 C630.7,586.0 634.7,586.4 640.0,586.3 C645.3,586.2 651.7,586.0 657.6,585.0 C663.5,584.0 669.3,582.4 675.2,580.3 C681.1,578.2 686.9,575.5 692.8,572.6 C698.7,569.7 705.7,565.6 710.4,563.0 C715.1,560.4 717.8,559.0 720.8,557.0 C723.8,555.0 726.2,553.1 728.7,551.0 C731.2,548.9 733.4,547.3 735.7,544.5 C738.1,541.7 740.9,537.9 742.8,534.0 C744.7,530.1 746.2,525.3 747.0,521.0 C747.8,516.7 747.5,510.2 747.6,508.0z" fill="#d2d2d2" filter="url(#bl1)"/>
<path d="M533.0,442.0 C532.8,443.3 531.9,445.3 531.7,450.0 C531.5,454.7 531.6,462.0 531.6,470.0 C531.6,478.0 531.6,493.3 531.6,498.0 C531.7,499.7 531.8,505.0 532.2,508.0 C532.6,511.0 533.6,513.2 534.2,516.0 C534.8,518.8 535.0,522.2 535.9,524.8 C536.8,527.4 537.8,529.3 539.4,531.8 C541.0,534.3 543.1,537.0 545.6,539.8 C548.1,542.6 551.5,546.1 554.4,548.6 C557.3,551.1 560.3,552.8 563.2,554.7 C566.1,556.6 569.1,558.4 572.0,560.0 C574.9,561.6 578.1,563.1 580.8,564.4 C583.5,565.6 585.4,566.4 588.0,567.5 C590.6,568.6 593.0,570.1 596.4,571.3 C599.8,572.5 604.2,573.9 608.1,574.9 C612.0,575.9 615.5,576.5 619.8,577.1 C624.1,577.7 629.2,578.0 634.0,578.2 C638.8,578.4 644.9,578.5 648.8,578.3 C652.7,578.1 654.7,577.4 657.6,576.8 C660.5,576.2 663.5,575.7 666.4,574.9 C669.3,574.1 672.3,573.2 675.2,572.2 C678.1,571.2 681.1,570.0 684.0,568.7 C686.9,567.5 689.9,566.1 692.8,564.7 C695.7,563.3 698.7,561.9 701.6,560.4 C704.5,558.9 707.3,557.3 710.4,555.5 C713.5,553.7 717.7,551.5 720.0,549.8 C722.3,548.1 722.4,547.2 724.3,545.2 C726.2,543.2 729.1,540.3 731.3,537.8 C733.5,535.2 735.7,532.5 737.5,529.9 C739.3,527.3 740.7,524.8 741.9,522.0 C743.1,519.2 743.9,516.9 744.5,513.2 C745.1,509.5 745.2,502.2 745.4,500.0 C745.4,496.7 745.3,488.0 745.3,480.0 C745.3,472.0 745.4,457.8 745.2,452.0 C745.0,446.2 744.2,446.2 744.0,445.0z" fill="url(#yBand)" stroke="#3a290a" stroke-width="0.800"/>
<path d="M533.2,511.0 C533.5,512.4 534.1,516.5 535.0,519.5 C535.9,522.5 536.8,526.1 538.6,529.2 C540.4,532.3 543.0,535.2 545.6,538.0 C548.2,540.8 551.5,543.6 554.4,545.9 C557.3,548.2 560.3,549.8 563.2,551.6 C566.1,553.4 569.1,555.4 572.0,556.9 C574.9,558.4 578.1,559.7 580.8,560.9 C583.5,562.1 584.8,562.9 588.0,564.0 C591.2,565.1 595.5,566.6 600.0,567.6 C604.5,568.6 610.0,569.7 615.0,570.3 C620.0,570.9 625.8,571.2 630.0,571.4 C634.2,571.6 635.4,571.6 640.0,571.4 C644.6,571.2 651.7,571.0 657.6,570.0 C663.5,569.0 669.3,567.4 675.2,565.6 C681.1,563.8 686.9,561.6 692.8,559.0 C698.7,556.4 705.9,552.5 710.4,550.2 C714.9,547.9 716.6,547.8 720.0,545.0 C723.4,542.2 727.8,537.4 731.0,533.5 C734.2,529.6 737.0,525.2 739.0,521.5 C741.0,517.8 742.6,512.8 743.3,511.0" fill="none" stroke="#2a1c05" stroke-width="0.850" opacity="0.900" clip-path="url(#cBand)"/>
<path d="M532.3,448.0 C532.5,449.9 533.0,454.9 533.6,459.4 C534.2,463.8 534.5,470.0 535.8,474.7 C537.1,479.4 538.9,483.5 541.4,487.5 C543.9,491.5 547.1,495.2 550.5,498.5 C553.9,501.8 557.9,504.8 562.0,507.5 C566.1,510.2 569.3,512.2 575.0,515.0 C580.7,517.8 589.3,521.9 596.0,524.3 C602.7,526.7 608.7,528.1 615.0,529.3 C621.3,530.5 627.3,531.2 634.0,531.3 C640.7,531.4 647.0,531.2 655.0,529.8 C663.0,528.4 673.5,526.0 681.9,523.0 C690.3,520.0 698.3,515.8 705.3,511.5 C712.3,507.2 718.5,503.2 724.0,497.5 C729.5,491.8 734.8,483.7 738.1,477.5 C741.4,471.3 742.9,465.1 744.0,460.5 C745.1,455.9 744.8,451.8 745.0,450.0 L745.2,452 L740,440 L537,440 L532,448z" fill="#d7a039" clip-path="url(#cBand)"/>
<path d="M532.3,448.0 C532.5,449.9 533.0,454.9 533.6,459.4 C534.2,463.8 534.5,470.0 535.8,474.7 C537.1,479.4 538.9,483.5 541.4,487.5 C543.9,491.5 547.1,495.2 550.5,498.5 C553.9,501.8 557.9,504.8 562.0,507.5 C566.1,510.2 569.3,512.2 575.0,515.0 C580.7,517.8 589.3,521.9 596.0,524.3 C602.7,526.7 608.7,528.1 615.0,529.3 C621.3,530.5 627.3,531.2 634.0,531.3 C640.7,531.4 647.0,531.2 655.0,529.8 C663.0,528.4 673.5,526.0 681.9,523.0 C690.3,520.0 698.3,515.8 705.3,511.5 C712.3,507.2 718.5,503.2 724.0,497.5 C729.5,491.8 734.8,483.7 738.1,477.5 C741.4,471.3 742.9,465.1 744.0,460.5 C745.1,455.9 744.8,451.8 745.0,450.0 L742,440 L535,440z" fill="url(#yGr2)" stroke="none"/>
<path d="M533.5,452.0 C534.0,454.2 535.0,460.6 536.5,465.0 C538.0,469.4 539.6,473.8 542.4,478.2 C545.1,482.6 549.3,487.5 553.0,491.1 C556.7,494.7 560.4,497.1 564.7,499.9 C569.0,502.7 573.6,505.4 578.8,508.0 C584.0,510.6 590.0,513.4 596.0,515.5 C602.0,517.6 608.7,519.4 615.0,520.6 C621.3,521.8 627.3,522.6 634.0,522.7 C640.7,522.8 647.0,522.7 655.0,521.4 C663.0,520.1 673.5,517.8 681.9,515.0 C690.3,512.2 698.3,508.6 705.3,504.5 C712.3,500.4 718.5,496.1 724.0,490.5 C729.5,484.9 735.2,477.4 738.5,471.0 C741.8,464.6 742.8,455.2 743.7,452.0 L741,440 L536,440z" fill="url(#yGr3)"/>
<path d="M535.0,452.0 C535.6,454.0 537.3,460.3 538.9,464.1 C540.5,467.9 542.1,471.0 544.8,474.7 C547.5,478.4 551.6,483.1 555.3,486.4 C559.0,489.7 562.5,491.8 567.0,494.6 C571.5,497.5 577.5,500.9 582.3,503.5 C587.1,506.1 590.5,508.3 596.0,510.5 C601.5,512.7 608.7,515.3 615.0,516.8 C621.3,518.2 627.3,519.0 634.0,519.2 C640.7,519.4 647.0,519.2 655.0,517.8 C663.0,516.4 673.5,513.9 681.9,511.0 C690.3,508.1 698.3,504.4 705.3,500.3 C712.3,496.2 718.5,491.7 724.0,486.2 C729.5,480.7 735.1,473.2 738.1,467.5 C741.1,461.8 741.5,454.6 742.2,452.0 L741,440 L536,440z" fill="url(#yGr1)"/>
<path d="M532.3,448.0 C532.5,449.9 533.0,454.9 533.6,459.4 C534.2,463.8 534.5,470.0 535.8,474.7 C537.1,479.4 538.9,483.5 541.4,487.5 C543.9,491.5 547.1,495.2 550.5,498.5 C553.9,501.8 557.9,504.8 562.0,507.5 C566.1,510.2 569.3,512.2 575.0,515.0 C580.7,517.8 589.3,521.9 596.0,524.3 C602.7,526.7 608.7,528.1 615.0,529.3 C621.3,530.5 627.3,531.2 634.0,531.3 C640.7,531.4 647.0,531.2 655.0,529.8 C663.0,528.4 673.5,526.0 681.9,523.0 C690.3,520.0 698.3,515.8 705.3,511.5 C712.3,507.2 718.5,503.2 724.0,497.5 C729.5,491.8 734.8,483.7 738.1,477.5 C741.4,471.3 742.9,465.1 744.0,460.5 C745.1,455.9 744.8,451.8 745.0,450.0" fill="none" stroke="#2a1c05" stroke-width="0.900"/>
<path d="M533.5,452.0 C534.0,454.2 535.0,460.6 536.5,465.0 C538.0,469.4 539.6,473.8 542.4,478.2 C545.1,482.6 549.3,487.5 553.0,491.1 C556.7,494.7 560.4,497.1 564.7,499.9 C569.0,502.7 573.6,505.4 578.8,508.0 C584.0,510.6 590.0,513.4 596.0,515.5 C602.0,517.6 608.7,519.4 615.0,520.6 C621.3,521.8 627.3,522.6 634.0,522.7 C640.7,522.8 647.0,522.7 655.0,521.4 C663.0,520.1 673.5,517.8 681.9,515.0 C690.3,512.2 698.3,508.6 705.3,504.5 C712.3,500.4 718.5,496.1 724.0,490.5 C729.5,484.9 735.2,477.4 738.5,471.0 C741.8,464.6 742.8,455.2 743.7,452.0" fill="none" stroke="#2a1c05" stroke-width="0.850"/>
<path d="M535.0,452.0 C535.6,454.0 537.3,460.3 538.9,464.1 C540.5,467.9 542.1,471.0 544.8,474.7 C547.5,478.4 551.6,483.1 555.3,486.4 C559.0,489.7 562.5,491.8 567.0,494.6 C571.5,497.5 577.5,500.9 582.3,503.5 C587.1,506.1 590.5,508.3 596.0,510.5 C601.5,512.7 608.7,515.3 615.0,516.8 C621.3,518.2 627.3,519.0 634.0,519.2 C640.7,519.4 647.0,519.2 655.0,517.8 C663.0,516.4 673.5,513.9 681.9,511.0 C690.3,508.1 698.3,504.4 705.3,500.3 C712.3,496.2 718.5,491.7 724.0,486.2 C729.5,480.7 735.1,473.2 738.1,467.5 C741.1,461.8 741.5,454.6 742.2,452.0" fill="none" stroke="#2a1c05" stroke-width="0.850"/>
<path d="M600.0,509.3 C602.0,509.9 608.0,511.8 612.0,512.6 C616.0,513.4 620.3,513.9 624.0,514.2 C627.7,514.5 630.3,514.6 634.0,514.5 C637.7,514.4 641.7,514.3 646.0,513.8 C650.3,513.2 657.7,511.6 660.0,511.2" fill="none" stroke="#f3d89c" stroke-width="2.400" opacity="0.550" filter="url(#bl1)"/>
<ellipse cx="629.500" cy="514.400" rx="5" ry="0.900" fill="#fff7e0" opacity="0.900"/>
<path d="M541.2,463.4 C542.6,465.2 546.1,470.8 549.4,473.9 C552.7,477.0 556.9,479.6 561.2,482.1 C565.5,484.7 569.4,486.9 575.2,489.2 C581.0,491.6 589.4,494.2 596.0,496.2 C602.6,498.2 611.8,500.5 615.0,501.4" fill="none" stroke="#f7e8c0" stroke-width="1.100" opacity="0.650"/>
<path d="M556.5,393.5 C555.3,395.2 551.6,400.5 549.5,403.5 C547.4,406.5 545.4,408.8 543.6,411.7 C541.8,414.6 540.1,417.8 538.9,421.1 C537.7,424.4 537.1,428.4 536.6,431.7 C536.1,435.0 535.7,438.8 535.6,441.0 C535.5,443.2 535.8,444.3 535.8,445.0 C536.0,445.8 536.2,447.2 537.1,450.0 C538.0,452.8 539.2,458.1 541.2,461.8 C543.2,465.5 546.1,469.2 549.4,472.3 C552.7,475.4 556.9,477.9 561.2,480.5 C565.5,483.1 569.4,485.2 575.2,487.6 C581.0,490.0 589.4,492.6 596.0,494.6 C602.6,496.6 608.7,498.6 615.0,499.8 C621.3,501.0 627.3,501.8 634.0,501.8 C640.7,501.8 647.0,501.3 655.0,499.8 C663.0,498.3 673.5,495.9 681.9,493.0 C690.3,490.1 698.3,486.6 705.3,482.7 C712.3,478.8 718.9,474.3 724.0,469.8 C729.1,465.3 733.0,459.4 735.8,455.8 C738.5,452.2 739.6,449.8 740.5,448.0 C741.4,446.2 741.2,445.5 741.4,445.0 C741.4,444.3 741.7,443.2 741.6,441.0 C741.5,438.8 741.1,435.0 740.6,431.7 C740.1,428.4 739.5,424.4 738.3,421.1 C737.1,417.8 735.4,414.6 733.6,411.7 C731.8,408.8 729.9,406.5 727.7,403.5 C725.6,400.5 721.9,395.2 720.7,393.5z" fill="url(#yDome)" stroke="#2a1c05" stroke-width="0.850"/>
<ellipse cx="638.300" cy="411" rx="85.400" ry="56" fill="#dfa83e" stroke="#2a1c05" stroke-width="0.850"/>
<path d="M563.500,400.300 V412.300 A75,49 0 0 0 713.500,412.300 V400.300z" fill="url(#gRim)" stroke="#2b2a27" stroke-width="0.600"/>
<ellipse cx="638.500" cy="400.600" rx="75" ry="49" fill="url(#gDisc)" stroke="#33322e" stroke-width="0.700"/>
<ellipse cx="638.400" cy="400.500" rx="26.500" ry="15.700" fill="#403f3b" stroke="#2b2a27" stroke-width="0.700"/>
<g clip-path="url(#cHole)"><ellipse cx="638.400" cy="410.200" rx="23.800" ry="12" fill="#c5912c"/><ellipse cx="638.400" cy="413.500" rx="15" ry="6.500" fill="#b9831f"/></g>
<path d="M622.900,384 V411.500 Q639,418.500 655.200,411.500 V396z" fill="#3d3c39"/>
<!-- hook tube -->
<g clip-path="url(#cHook)">
<rect x="600" y="240" width="90" height="175" fill="#7a7872"/>
<g filter="url(#bl2)">
<!-- dark: right/lower side of upper arm -->
<path d="M664,262 C672,258 684,260 683,268 C682,280 676,288 666,294 C658,299 648,301 642,306 C640,300 646,295 654,291 C662,286 666,276 664,262z" fill="#53514c"/>
<!-- light: top of upper bend -->
<path d="M626,290 C630,280 640,274 652,270 C656,270 658,274 654,279 C646,284 636,288 632,296 C629,302 628,308 626,312 C622,306 623,297 626,290z" fill="#a3a198"/>
<!-- left outer edge darker -->
<path d="M606,300 C607,290 612,284 616,282 C613,292 612,302 613,312 C615,324 620,334 628,342 C634,348 642,352 646,358 L642,362 C636,356 626,352 618,342 C610,332 605,315 606,300z" fill="#595752"/>
<!-- light: mid right of S -->
<path d="M640,322 C648,326 658,332 664,338 C670,344 672,352 670,360 C668,366 664,370 662,366 C662,356 658,348 652,342 C646,336 640,330 640,322z" fill="#a09e95"/>
<!-- dark: right/bottom of lower bend -->
<path d="M672,342 C680,352 678,370 672,380 C668,388 660,396 654,402 L648,404 C656,394 664,384 666,372 C668,362 668,352 672,342z" fill="#504f4a"/>
<!-- lower part left lighter -->
<path d="M640,372 C646,368 652,372 652,380 C650,388 644,396 638,401 L634,398 C630,392 634,380 640,372z" fill="#8a8882"/>
<path d="M622,384 L628,381 C628,390 632,398 639,403 L622,403z" fill="#8d8b85"/>
</g>
</g>
<use href="#hookP" fill="none" stroke="#2d2c29" stroke-width="0.700"/>
<path d="M664.400,265.700 C664,274 662.500,279 659.400,283 C655,289.500 650,293.500 645.400,296.900 C638,302 632.500,305.500 628.700,310.800 C625,316 622.800,320 623.100,324.800 C623.500,329 624.200,330 625.200,330 C627,333.500 630,337 632.900,339.400 C636,342.500 640,345 643.400,347.600 C647,350 650,352 652.800,354.600 C655.500,357.500 657.300,360 658.100,362.900 C659,365.500 659,368 658.700,369.900 C658.200,373.500 657.500,376.500 656.300,379.300 C655,382.500 653.500,385.500 651.600,388.700 C650,391.500 648,393.500 645.800,395.700 C643.500,398 641,400 638.700,401.600" fill="none" stroke="#22211f" stroke-width="0.750"/>
<path d="M627.600,381.600 C627.800,384.500 628.300,387 629.300,389.900 C630.500,393 632,395.500 634,398 C635.500,399.800 637,401.200 638.700,402.200" fill="none" stroke="#22211f" stroke-width="0.700"/>
<ellipse cx="664.800" cy="253.900" rx="15.400" ry="10.600" transform="rotate(-16 664.800 253.900)" fill="#87847c" stroke="#2d2c29" stroke-width="0.700"/>
<ellipse cx="665.300" cy="253.700" rx="5.700" ry="4.300" transform="rotate(-16 665.300 253.700)" fill="#5e5c57" stroke="#2d2c29" stroke-width="0.800"/>

<rect x="626.700" y="405.800" width="24" height="10" fill="#e6e6e6"/><rect x="626.700" y="414" width="24" height="5.700" fill="#78c4c5"/><path d="M632.500,409 h4 v5 h4.600 v-5 h4 v6 h-12.600z" fill="#78c4c5"/>
<g clip-path="url(#cBand)"><g transform="matrix(0.840,-0.560,-0.360,1,709.900,542.600)" font-family="'Liberation Sans',sans-serif" font-weight="bold" fill="url(#hatch)" stroke="#1f1503" stroke-width="1.050" stroke-linejoin="round"><text x="0" y="0"><tspan font-size="26">A</tspan><tspan font-size="16" dx="0.500">AUTODESK</tspan></text></g></g>
</svg>
<!-- view cube -->
<svg style="left:1190px;top:136px" width="86" height="90" viewBox="1190 136 86 90">
<defs>
<filter id="vb" x="-30%" y="-30%" width="160%" height="160%"><feGaussianBlur stdDeviation="2.400"/></filter>
<linearGradient id="vcT" x1="0" y1="0" x2="1" y2="1"><stop offset="0" stop-color="#f3f3f3"/><stop offset="1" stop-color="#e6e6e6"/></linearGradient>
<linearGradient id="vcF" x1="0" y1="0" x2="0" y2="1"><stop offset="0" stop-color="#efefef"/><stop offset="1" stop-color="#dedede"/></linearGradient>
</defs>
<path d="M1218,196 L1250,198 L1253,210 L1222,209z" fill="#bdbdbd" filter="url(#vb)" opacity="0.800"/>
<path d="M1216.400,156.700 L1249.600,158.600 L1248.600,180.600 L1210,177.700z" fill="url(#vcT)"/>
<path d="M1210,177.700 L1248.600,180.600 L1246.700,205.500 L1213,202.600z" fill="url(#vcF)"/>
<path d="M1220,172 h24 v12 h-24z" fill="#e9eef5" opacity="0.700"/>
<g fill="none" stroke="#6e6e6e" stroke-width="0.700" stroke-dasharray="3.200,1.600">
<path d="M1216.400,156.700 L1249.600,158.600 L1248.600,180.600 L1246.700,205.500 L1213,202.600 L1210,177.700z"/>
</g>
<path d="M1210,177.700 L1248.600,180.600" fill="none" stroke="#3d3d3d" stroke-width="0.800" stroke-dasharray="5,1.500"/>
<g font-family="'Liberation Sans',sans-serif" fill="#6f6f6f">
<text transform="matrix(0.960,0.072,-0.040,1,1215.800,193.800)" font-size="6" letter-spacing="0.350">DERECHA</text>
<text transform="matrix(0.110,-0.800,0.900,0.100,1233.600,177)" font-size="5.600" letter-spacing="0.100" fill="#8a8a8a">ARRIBA</text>
</g>
<path d="M1216.400,157 V152.700" stroke="#6d6df2" stroke-width="1.300"/>
<path d="M1248.800,184.200 H1253.200" stroke="#7df07d" stroke-width="1.300"/>
<path d="M1213.200,203 L1212,207.800" stroke="#f27c7c" stroke-width="1.300"/>
<g font-family="'Liberation Sans',sans-serif" font-size="10.500" font-weight="bold">
<text x="1212.600" y="152" fill="#7272f2">Z</text>
<text x="1253.200" y="188.200" fill="#86ee86" font-size="10">Y</text>
<text x="1207.800" y="216" fill="#f28282">X</text>
</g>
</svg>
<!-- comments panel, nav toolbar, timeline -->
<div class="a" style="left:5px;top:608px;width:281px;height:23px;background:#f2f2f2;border:1px solid #cdcdcd"></div>
<div class="a" style="left:527.500px;top:608.600px;width:222.300px;height:22.400px;background:#f0f0f0"></div>
<div class="a" style="left:1px;top:635px;width:1275px;height:2px;background:#c6c6c6"></div>
<div class="a" style="left:1px;top:637px;width:1275px;height:44px;background:#f2f2f2"></div>
<div class="a" style="left:1px;top:681px;width:1276px;height:1px;background:#b2b2b2"></div>
<svg style="left:0;top:600px" width="1280" height="82" viewBox="0 600 1280 82">
<defs>
<linearGradient id="gLens" x1="0" y1="0" x2="0" y2="1"><stop offset="0" stop-color="#f6fbfb"/><stop offset="1" stop-color="#bcd8da"/></linearGradient>
<linearGradient id="gGrid" x1="0" y1="0" x2="0" y2="1"><stop offset="0" stop-color="#ffffff"/><stop offset="1" stop-color="#b9bcc6"/></linearGradient>
<linearGradient id="gBox" x1="0" y1="0" x2="1" y2="1"><stop offset="0" stop-color="#f0f0f0"/><stop offset="1" stop-color="#bdbdbd"/></linearGradient>
<path id="da" d="M0,0 h5.400 l-2.700,3.200z" fill="#2a2a2a"/>
<g id="tlbox"><path d="M0.600,4.300 l3.600,-3.700 h10.600 v10.600 l-3.700,3.700 h-10.500z" fill="url(#gBox)" stroke="#6e6e6e" stroke-width="1.100" stroke-linejoin="round"/><path d="M0.600,4.300 h10.500 v10.600 M11.100,4.300 l3.700,-3.700" fill="none" stroke="#7c7c7c" stroke-width="0.900"/><g fill="none" stroke="#8a8a8a" stroke-width="1.100"><ellipse cx="5.200" cy="9" rx="3.300" ry="1.900" transform="rotate(-38 5.200 9)"/><ellipse cx="9.400" cy="6.200" rx="3.300" ry="1.900" transform="rotate(-38 9.400 6.200)"/></g></g>
<g id="tljoint"><path d="M0.700,5.400 q0,-2.400 2,-3.400 l2.200,-1.200 q1.900,-0.400 1.900,1.600 v6.800 l-2,1 v3.400 l-4.100,2.200z" fill="#e1e1e1" stroke="#777" stroke-width="0.900" stroke-linejoin="round"/><path d="M4.900,0.900 q-1.700,1 -1.700,3.200 v10.400" fill="none" stroke="#8c8c8c" stroke-width="0.700"/><path d="M8.300,8.800 l2.700,-1.300 v-4.500 l1.900,-1.400 l2.500,2.200 v11.400 l-4.200,-2.900 h-2.900z" fill="#d4d4d4" stroke="#777" stroke-width="0.900" stroke-linejoin="round"/><path d="M11,3.200 v9" stroke="#8c8c8c" stroke-width="0.700"/><path d="M10.200,3.300 v2.900 M5.700,7.400 v2.900" stroke="#1f8ce0" stroke-width="1.300"/></g>
</defs>
<!-- comments header icons -->
<circle cx="270.300" cy="619.400" r="4.300" fill="#1a1a1a"/><path d="M267.700,619.400 h5.200 M270.300,616.800 v5.200" stroke="#f2f2f2" stroke-width="1.400"/>
<path d="M281.500,613.700 V625 M283.500,616 V622.700" stroke="#858585" stroke-width="1"/>
<!-- orbit -->
<g fill="none" stroke="#2c2c2c" stroke-width="1.200" stroke-linejoin="round">
<path d="M538.800,618.600 q6.200,0.800 6.200,3 q0,2.600 -7.600,2.600 q-3.300,0 -5.400,-0.600" />
<path d="M536.800,618.500 q-6.700,0.700 -6.700,3.200 q0,0.900 1,1.500"/>
<path d="M537.300,626.900 v-10.700 h-1.700 l2.500,-3.800 2.500,3.800 h-1.700 v10.700z" fill="#fff" stroke-width="0.900"/>
</g>
<path d="M530.200,623.500 l3.600,-2.700 v5z" fill="#2c2c2c"/>
<use href="#da" x="550.200" y="618"/>
<!-- look at -->
<g fill="none" stroke="#3a3a3a" stroke-width="1.200" stroke-linejoin="round">
<path d="M561.800,617.300 h14 v9.300 h-14z" fill="#f5f5f5"/>
<path d="M564.500,620.200 h8.600 v3.600 h-8.600z" fill="#8e939e"/>
<path d="M563,616.800 l3.800,-3.800 M566.200,614.500 l3,1.200 4.600,-2.200 v3.400" />
</g>
<!-- hand -->
<path d="M590.300,627 C589.500,625 588,623.500 586.600,621.600 C585.800,620.400 586.300,619.600 587.200,619.700 C588.200,619.900 589,621 589.800,622 L589.800,614.800 C589.800,613.500 591.800,613.500 591.800,614.800 L591.800,619 L592.600,619 L592.600,613 C592.600,611.700 594.700,611.700 594.700,613 L594.700,619 L595.500,619 L595.500,613.800 C595.500,612.500 597.600,612.500 597.600,613.800 L597.600,619.400 L598.500,619.600 L598.500,616.200 C598.500,614.900 600.500,614.900 600.500,616.200 L600.500,621 C600.500,624 599,625.500 598,627z" fill="#fbfbfb" stroke="#2c2c2c" stroke-width="1" stroke-linejoin="round"/>
<path d="M592.200,619 V621.500 M595.100,619 V621.500 M598,619.500 V621.500" stroke="#2c2c2c" stroke-width="0.800" fill="none"/>
<!-- zoom -->
<circle cx="614.600" cy="618.700" r="4.700" fill="url(#gLens)" stroke="#2c2c2c" stroke-width="1.300"/>
<path d="M618,622.400 l4,4" stroke="#2c2c2c" stroke-width="2.400" stroke-linecap="round"/>
<path d="M620.300,615.200 h5 M622.800,612.800 v4.800 M620.300,619 h5" stroke="#2c2c2c" stroke-width="1.100"/>
<!-- zoom window -->
<rect x="634.300" y="612.400" width="14.600" height="14.200" fill="none" stroke="#3a3a3a" stroke-width="1" stroke-dasharray="1.300,1.700"/>
<circle cx="640.300" cy="617.800" r="5.800" fill="url(#gLens)" stroke="#2c2c2c" stroke-width="1.400"/>
<path d="M644.600,622.200 l4,4" stroke="#2c2c2c" stroke-width="2.600" stroke-linecap="round"/>
<use href="#da" x="654.200" y="618"/>
<!-- display -->
<rect x="665.600" y="612.500" width="14.400" height="11.400" rx="1.300" fill="#d9d9d9" stroke="#6a6a6a" stroke-width="1"/>
<rect x="667.700" y="614.500" width="10.200" height="7.400" rx="0.800" fill="#93b3e2" stroke="#2d4b8d" stroke-width="1.100"/>
<path d="M670.700,624 h4.400 v1.400 h1.300 v1.500 h-7 v-1.500 h1.300z" fill="#f5f5f5" stroke="#6a6a6a" stroke-width="0.800"/>
<use href="#da" x="682.500" y="618"/>
<!-- grid -->
<rect x="694.400" y="612.300" width="14.400" height="14.400" rx="0.800" fill="#6b6b6b"/>
<g fill="url(#gGrid)">
<rect x="695.500" y="613.400" width="12.200" height="12.200"/>
</g>
<path d="M697.950,613 v13 M700.750,613 v13 M703.550,613 v13 M706.350,613 v13 M695,615.850 h13 M695,618.650 h13 M695,621.450 h13 M695,624.250 h13 M695.400,613.100 v12.800 M707.800,613.100 v12.800 M695,613.300 h13 M695,625.700 h13" stroke="#6b6b6b" stroke-width="0.700" fill="none"/>
<use href="#da" x="711.500" y="618"/>
<!-- viewports -->
<rect x="722.900" y="613" width="14.700" height="12.300" rx="1.400" fill="#34518f"/>
<g fill="#88a6dc"><rect x="724" y="614.100" width="5.800" height="4.600" rx="0.500"/><rect x="730.900" y="614.100" width="5.700" height="4.600" rx="0.500"/><rect x="724" y="619.800" width="5.800" height="4.500" rx="0.500"/><rect x="730.900" y="619.800" width="5.700" height="4.500" rx="0.500"/></g>
<g fill="#6d8ecb"><rect x="725.600" y="615.300" width="2.600" height="2.200"/><rect x="732.500" y="615.300" width="2.600" height="2.200"/><rect x="725.600" y="621" width="2.600" height="2.200"/><rect x="732.500" y="621" width="2.600" height="2.200"/></g>
<use href="#da" x="740.500" y="618"/>
<!-- timeline playback -->
<g fill="#474747">
<rect x="11" y="652.500" width="2" height="13.300"/><path d="M22.900,653.400 v11.700 l-9.700,-5.850z"/>
<path d="M43.200,653 v12.500 l-9.300,-6.250z"/><rect x="44.200" y="656.300" width="1.800" height="5.800"/>
<path d="M57.900,651.700 v15.100 l11.500,-7.550z"/>
<rect x="80.500" y="656.300" width="1.700" height="5.800"/><path d="M83.200,653 v12.500 l9.400,-6.250z"/>
<path d="M105,653.400 v11.700 l9.500,-5.850z"/><rect x="114.300" y="652.500" width="1.900" height="13.300"/>
</g>
<!-- timeline features -->
<use href="#tlbox" x="137.700" y="650.600"/><use href="#tlbox" x="160.100" y="650.600"/>
<use href="#tljoint" x="182.500" y="650.600"/>
<use href="#tlbox" x="205.100" y="650.600"/>
<use href="#tljoint" x="227.600" y="650.600"/>
<path d="M145.500,668.600 v5.500 h90.300 v-5.500 M168,668.600 v5.500 M190.300,668.600 v5.500 M212.900,668.600 v5.500" fill="none" stroke="#c6c6c6" stroke-width="1.300"/>
<!-- marker -->
<path d="M240.800,645 h11.400 v3.600 l-4.900,5 v21.500 h-1.700 v-21.500 l-4.800,-5z" fill="#5b5b5b"/>
<!-- gear -->
<path d="M1255.270,651.300 L1257.730,651.300 L1258.050,653.500 L1259.400,654.060 L1261.190,652.730 L1262.930,654.470 L1261.600,656.260 L1262.160,657.610 L1264.360,657.930 L1264.360,660.390 L1262.160,660.710 L1261.600,662.060 L1262.930,663.850 L1261.190,665.590 L1259.400,664.260 L1258.050,664.820 L1257.730,667.020 L1255.270,667.020 L1254.950,664.820 L1253.600,664.260 L1251.810,665.590 L1250.070,663.850 L1251.400,662.060 L1250.840,660.710 L1248.640,660.390 L1248.640,657.930 L1250.840,657.610 L1251.400,656.260 L1250.070,654.470 L1251.810,652.730 L1253.600,654.060 L1254.950,653.500z M1258.900,659.160 a2.400,2.400 0 1 0 -4.800,0 a2.400,2.400 0 1 0 4.800,0z" fill="#8f8f8f" fill-rule="evenodd"/>
</svg>
<div class="tx" style="left:27.5px;top:9px;font-size:12px;line-height:12px;font-weight:normal;color:#000;transform:scaleX(0.9174)">Autodesk Fusion 360 (Licencia educativa)</div>
<div class="tx" style="left:252.5px;top:41px;font-size:12px;line-height:12px;font-weight:normal;color:#5a5a5a;transform:scaleX(0.9517)">base v5</div>
<div class="tx" style="left:424.2px;top:41px;font-size:12px;line-height:12px;font-weight:normal;color:#5a5a5a;transform:scaleX(0.9165)">ANILLO v2</div>
<div class="tx" style="left:591.2px;top:41px;font-size:12px;line-height:12px;font-weight:normal;color:#2e2e2e;transform:scaleX(0.9041)">EMSAMBLE v2*</div>
<div class="tx" style="left:778.4px;top:41px;font-size:12px;line-height:12px;font-weight:normal;color:#5a5a5a;transform:scaleX(0.9130)">BRAZO 1 v2</div>
<div class="tx" style="left:957.0px;top:41px;font-size:12px;line-height:12px;font-weight:normal;color:#5a5a5a;transform:scaleX(0.9231)">BRASO 2 v3</div>
<div class="tx" style="left:1244.3px;top:39px;font-size:11px;line-height:11px;font-weight:normal;color:#555;transform:scaleX(0.9096)">AR</div>
<div class="tx" style="left:141.5px;top:64px;font-size:11px;line-height:11px;font-weight:normal;color:#1d94d8;transform:scaleX(0.8658)">SOLIDO</div>
<div class="tx" style="left:219.0px;top:64px;font-size:11px;line-height:11px;font-weight:normal;color:#3c3c3c;transform:scaleX(0.8028)">SUPERFICIE</div>
<div class="tx" style="left:315.2px;top:64px;font-size:11px;line-height:11px;font-weight:normal;color:#3c3c3c;transform:scaleX(0.9563)">MALLA</div>
<div class="tx" style="left:393.2px;top:64px;font-size:11px;line-height:11px;font-weight:normal;color:#3c3c3c;transform:scaleX(0.9031)">CHAPA</div>
<div class="tx" style="left:470.8px;top:64px;font-size:11px;line-height:11px;font-weight:normal;color:#3c3c3c;transform:scaleX(0.8546)">HERRAMIENTAS</div>
<div class="tx" style="left:40.0px;top:92px;font-size:11px;line-height:11px;font-weight:bold;color:#333;transform:scaleX(0.8415);-webkit-text-stroke:0">DISEÑO</div>
<div class="tx" style="left:222.8px;top:122px;font-size:11px;line-height:11px;font-weight:normal;color:#3c3c3c;transform:scaleX(0.8633)">CREAR</div>
<div class="tx" style="left:465.2px;top:122px;font-size:11px;line-height:11px;font-weight:normal;color:#3c3c3c;transform:scaleX(0.8423)">MODIFICAR</div>
<div class="tx" style="left:635.0px;top:122px;font-size:11px;line-height:11px;font-weight:normal;color:#3c3c3c;transform:scaleX(0.8915)">ENSAMBLAR</div>
<div class="tx" style="left:731.5px;top:122px;font-size:11px;line-height:11px;font-weight:normal;color:#3c3c3c;transform:scaleX(0.8373)">CONSTRUIR</div>
<div class="tx" style="left:819.5px;top:122px;font-size:11px;line-height:11px;font-weight:normal;color:#3c3c3c;transform:scaleX(0.8388)">INSPECCIONAR</div>
<div class="tx" style="left:926.5px;top:122px;font-size:11px;line-height:11px;font-weight:normal;color:#3c3c3c;transform:scaleX(0.8515)">INSERTAR</div>
<div class="tx" style="left:1012.8px;top:122px;font-size:11px;line-height:11px;font-weight:normal;color:#3c3c3c;transform:scaleX(0.8496)">SELECCIONAR</div>
<div class="tx" style="left:27.8px;top:146px;font-size:11px;line-height:11px;font-weight:normal;color:#595959;transform:scaleX(0.9009)">NAVEGADOR</div>
<div class="tx" style="left:27.8px;top:614px;font-size:11px;line-height:11px;font-weight:normal;color:#595959;transform:scaleX(0.8473)">COMENTARIOS</div>
<div class="tx" style="left:92.3px;top:172px;font-size:11px;line-height:11px;font-weight:bold;color:#fff;transform:scaleX(0.9163);-webkit-text-stroke:0">EMSAMBLE v2</div>
<div class="tx" style="left:86.0px;top:195px;font-size:11px;line-height:11px;font-weight:normal;color:#222;transform:scaleX(0.9190)">Configuración del documento</div>
<div class="tx" style="left:86.0px;top:217px;font-size:11px;line-height:11px;font-weight:normal;color:#222;transform:scaleX(0.9574)">Vistas guardadas</div>
<div class="tx" style="left:109.2px;top:240px;font-size:11px;line-height:11px;font-weight:normal;color:#222;transform:scaleX(0.9355)">Origen</div>
<div class="tx" style="left:109.2px;top:262px;font-size:11px;line-height:11px;font-weight:normal;color:#222;transform:scaleX(0.9267)">Uniones</div>
<div class="tx" style="left:133.0px;top:285px;font-size:11px;line-height:11px;font-weight:normal;color:#222;transform:scaleX(0.9349)">base v5:1</div>
<div class="tx" style="left:133.0px;top:307px;font-size:11px;line-height:11px;font-weight:normal;color:#222;transform:scaleX(0.9002)">ANILLO v2:1</div>
<div class="tx" style="left:133.0px;top:330px;font-size:11px;line-height:11px;font-weight:normal;color:#222;transform:scaleX(0.9113)">BRASO 2 v3:1</div>
</body>
</html>
